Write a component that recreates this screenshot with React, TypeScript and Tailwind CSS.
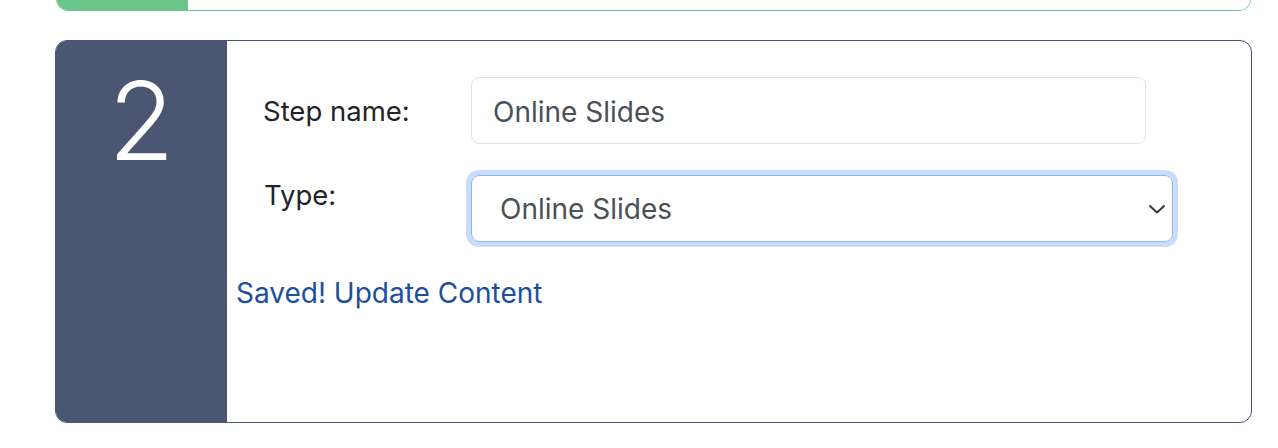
import React from "react";

export default function App() {
  return (
    <div className="w-full h-[448px] bg-white overflow-hidden pl-[55px] pr-[26px]" style={{ fontFamily: "Inter, 'Noto Sans', sans-serif" }}>
      {/* previous (cut off) card */}
      <div className="-mt-[40px] h-[51px] border border-[#6bc48a] rounded-[12px] overflow-hidden flex ml-[1px] mr-[1px]">
        <div className="w-[131px] bg-[#6bc48a]" />
        <div className="flex-1 bg-white" />
      </div>

      {/* step card */}
      <div className="mt-[29px] h-[383px] border border-[#4a5572] rounded-[12px] overflow-hidden flex">
        <div className="w-[171px] shrink-0 bg-[#4b5673] flex justify-center pt-[26px]">
          <span className="text-white text-[108px] leading-none font-light">2</span>
        </div>
        <div className="flex-1 pl-[9px] pt-[36px]">
          <div className="flex items-start">
            <div className="w-[235px] pl-[27px] pt-[16px] text-[27.5px] leading-[36px] text-[#212529]">Step name:</div>
            <div className="w-[675px] h-[67px] border border-[#dee2e6] rounded-[8px] px-[21px] pt-[2px] flex items-center text-[28px] text-[#495057]">
              Online Slides
            </div>
          </div>
          <div className="flex items-start mt-[31px]">
            <div className="w-[235px] pl-[28px] pt-[2px] text-[27.5px] leading-[36px] text-[#212529]">Type:</div>
            <div className="relative w-[702px] h-[67px] border border-[#86b7fe] rounded-[8px] ring-[5px] ring-[#cadcfd] pl-[28px] pr-[40px] flex items-center text-[28px] text-[#495057]">
              Online Slides
              <svg className="absolute right-[6px] top-[27px]" width="18" height="12" viewBox="0 0 18 12" fill="none">
                <path d="M2 3 L9 9.5 L16 3" stroke="#343a40" strokeWidth="2" strokeLinecap="round" strokeLinejoin="round" />
              </svg>
            </div>
          </div>
          <div className="mt-[33px] text-[28px] leading-[36px] text-[#1d4f9c]">Saved! Update Content</div>
        </div>
      </div>
    </div>
  );
}
